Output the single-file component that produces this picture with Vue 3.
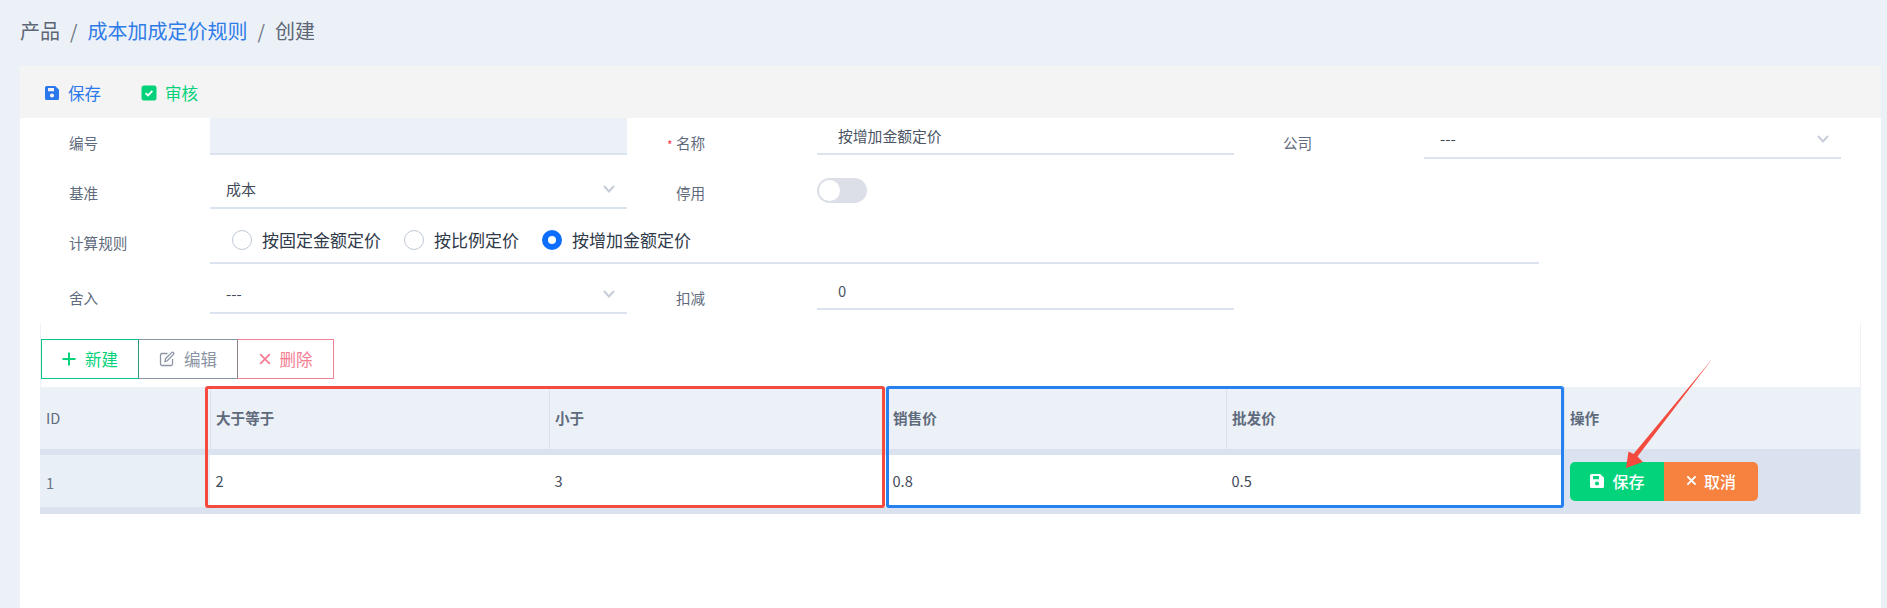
<script setup>
const radios = [
  { label: '按固定金额定价', checked: false },
  { label: '按比例定价', checked: false },
  { label: '按增加金额定价', checked: true }
]
const savePath = 'M2.5 1H11.2L15 4.8V13.5A1.5 1.5 0 0 1 13.5 15H2.5A1.5 1.5 0 0 1 1 13.5V2.5A1.5 1.5 0 0 1 2.5 1ZM4 3V6.2H10V3ZM8 8.4A2.1 2.1 0 1 0 8 12.6A2.1 2.1 0 1 0 8 8.4Z'
</script>

<template>
  <div class="page">
    <nav class="crumbs">
      <span>产品</span><i>/</i><a>成本加成定价规则</a><i>/</i><span>创建</span>
    </nav>
    <main class="panel">
      <div class="actions">
        <button class="act blue">
          <svg class="ic" viewBox="0 0 16 16"><path fill="currentColor" fill-rule="evenodd" :d="savePath" /></svg>保存
        </button>
        <button class="act green">
          <svg class="ic" viewBox="0 0 16 16"><rect x="0.5" y="0.5" width="15" height="15" rx="2.5" fill="currentColor" /><path d="M4.6 8.2 7 10.4 11.4 5.8" fill="none" stroke="#fff" stroke-width="1.8" /></svg>审核
        </button>
      </div>

      <form class="form">
        <div class="row">
          <div class="field">
            <label>编号</label>
            <div class="ctrl input readonly"></div>
          </div>
          <div class="field">
            <label><span class="req">*</span>名称</label>
            <div class="ctrl input">按增加金额定价</div>
          </div>
          <div class="field">
            <label>公司</label>
            <div class="ctrl select"><span>---</span>
              <svg class="chev" viewBox="0 0 12 8"><path d="M1 1 6 6.5 11 1" /></svg>
            </div>
          </div>
        </div>
        <div class="row">
          <div class="field">
            <label>基准</label>
            <div class="ctrl select"><span>成本</span>
              <svg class="chev" viewBox="0 0 12 8"><path d="M1 1 6 6.5 11 1" /></svg>
            </div>
          </div>
          <div class="field">
            <label>停用</label>
            <div class="switch-wrap"><span class="switch"><span class="knob"></span></span></div>
          </div>
        </div>
        <div class="row">
          <div class="field wide">
            <label>计算规则</label>
            <div class="ctrl radios">
              <span v-for="r in radios" :key="r.label" class="radio">
                <span class="dot" :class="{ on: r.checked }"></span>{{ r.label }}
              </span>
            </div>
          </div>
        </div>
        <div class="row">
          <div class="field">
            <label>舍入</label>
            <div class="ctrl select"><span>---</span>
              <svg class="chev" viewBox="0 0 12 8"><path d="M1 1 6 6.5 11 1" /></svg>
            </div>
          </div>
          <div class="field">
            <label>扣减</label>
            <div class="ctrl input">0</div>
          </div>
        </div>
      </form>

      <section class="detail">
        <div class="tools">
          <button class="tool t-new">
            <svg class="ti plus" viewBox="0 0 14 14"><path d="M7 0.5V13.5M0.5 7H13.5" fill="none" stroke="currentColor" stroke-width="2" /></svg>新建
          </button>
          <button class="tool t-edit">
            <svg class="ti" viewBox="0 0 16 16"><path d="M8.5 2.5H3A1.5 1.5 0 0 0 1.5 4V13A1.5 1.5 0 0 0 3 14.5H12A1.5 1.5 0 0 0 13.5 13V8M6 10.5 6.6 7.6 12.6 1.6A1.2 1.2 0 0 1 14.4 3.4L8.4 9.8Z" fill="none" stroke="currentColor" stroke-width="1.3" /></svg>编辑
          </button>
          <button class="tool t-del">
            <svg class="ti small" viewBox="0 0 12 12"><path d="M1.2 1.2 10.8 10.8M10.8 1.2 1.2 10.8" fill="none" stroke="currentColor" stroke-width="1.8" /></svg>删除
          </button>
        </div>

        <div class="table-wrap">
          <table>
            <colgroup>
              <col style="width:170px" /><col style="width:339px" /><col style="width:338px" />
              <col style="width:339px" /><col style="width:338px" /><col />
            </colgroup>
            <thead>
              <tr>
                <th class="id">ID</th>
                <th>大于等于</th>
                <th>小于</th>
                <th>销售价</th>
                <th>批发价</th>
                <th>操作</th>
              </tr>
            </thead>
            <tbody>
              <tr>
                <td class="id"><span>1</span></td>
                <td>2</td>
                <td>3</td>
                <td>0.8</td>
                <td>0.5</td>
                <td class="ops">
                  <div class="btns">
                    <button class="b-save">
                      <svg class="bi" viewBox="0 0 16 16"><path fill="currentColor" fill-rule="evenodd" :d="savePath" /></svg>保存
                    </button>
                    <button class="b-cancel">
                      <svg class="bi x" viewBox="0 0 12 12"><path d="M1.5 1.5 10.5 10.5M10.5 1.5 1.5 10.5" fill="none" stroke="currentColor" stroke-width="2.2" /></svg>取消
                    </button>
                  </div>
                </td>
              </tr>
            </tbody>
          </table>
          <div class="mark red"></div>
          <div class="mark bluebox"></div>
          <svg class="arrow" viewBox="0 0 100 120" width="100" height="120">
            <path d="M93 3 17.5 101.5 23 107 6 113 8.5 96.5 13.5 99Z" fill="#f44b3e" />
          </svg>
        </div>
      </section>
    </main>
  </div>
</template>

<style>
html, body { margin: 0; background: #ecf1f8; overflow: hidden; }
</style>

<style scoped>
.page {
  height: 608px;
  overflow: hidden;
  background: #ecf1f8;
  font-family: "Noto Sans CJK SC", sans-serif;
  font-size: 14.6px;
  color: #5f6b7c;
}
.crumbs {
  height: 66px;
  box-sizing: border-box;
  padding: 16px 0 0 20px;
  display: flex;
  align-items: flex-start;
  font-size: 20px;
  line-height: 30px;
  color: #5d6675;
}
.crumbs i { font-style: normal; margin: 0 10px; font-size: 19px; color: #6b7280; }
.crumbs a { color: #2f7ce8; }
.panel {
  height: 542px;
  margin: 0 6px 0 20px;
  background: #fff;
}
.actions {
  height: 52px;
  box-sizing: border-box;
  padding: 2px 0 0 24px;
  background: #f4f4f4;
  display: flex;
  align-items: center;
  gap: 40px;
}
button {
  font-family: inherit;
  border: 0;
  background: none;
  padding: 0;
  cursor: pointer;
}
.act {
  display: flex;
  align-items: center;
  gap: 8px;
  font-size: 16.5px;
  line-height: 20px;
}
.ic { width: 16px; height: 16px; }
.blue { color: #2b78ec; }
.green { color: #04d27a; }

.form {
  display: flex;
  flex-direction: column;
  gap: 9px;
  padding-left: 49px;
}
.row { display: flex; gap: 49px; }
.field { display: flex; width: 558px; }
.field.wide { width: 1470px; }
.field label {
  flex: none;
  width: 141px;
  padding-top: 15px;
  line-height: 20px;
  color: #5f6b7c;
  position: relative;
}
.req {
  position: absolute;
  left: -9px;
  top: 17px;
  color: #f0394d;
  font-size: 12px;
}
.ctrl {
  flex: 1;
  box-sizing: border-box;
  border-bottom: 2px solid #dbe3ee;
  display: flex;
  align-items: center;
  color: #4b5563;
}
.input { height: 37px; padding-left: 21px; font-size: 14.8px; }
.readonly { background: #ecf1f8; }
.select {
  height: 41px;
  padding: 2px 12px 0 16px;
  justify-content: space-between;
  font-size: 15px;
  color: #3f4a5a;
}
.chev { width: 12px; height: 8px; }
.chev path { fill: none; stroke: #c7cdd8; stroke-width: 2; }
.switch-wrap { flex: 1; height: 41px; padding-top: 3px; box-sizing: border-box; display: flex; align-items: center; }
.switch {
  width: 50px;
  height: 25px;
  border-radius: 13px;
  background: #dcdfe7;
  padding: 2px;
  box-sizing: border-box;
}
.knob {
  display: block;
  width: 21px;
  height: 21px;
  border-radius: 50%;
  background: #fff;
}
.radios {
  height: 46px;
  padding: 0 0 1px 22px;
  gap: 23px;
}
.radio {
  display: flex;
  align-items: center;
  gap: 10px;
  font-size: 17px;
  line-height: 22px;
  color: #2f3a4a;
}
.dot {
  width: 20px;
  height: 20px;
  box-sizing: border-box;
  border-radius: 50%;
  border: 1px solid #c0c8d6;
  background: #fff;
}
.dot.on { border: 6px solid #0d6efd; }

.detail {
  margin: 9px 0 0 20px;
  width: 1821px;
  box-sizing: border-box;
  border-left: 1px solid #ecf1f8;
  border-right: 1px solid #ecf1f8;
  padding-top: 16px;
}
.tools { display: flex; height: 40px; }
.tool {
  height: 40px;
  box-sizing: border-box;
  border: 1.5px solid;
  background: #fff;
  display: flex;
  align-items: center;
  justify-content: center;
  gap: 9px;
  font-size: 16.5px;
  margin-right: -1px;
}
.ti { width: 16px; height: 16px; }
.ti.plus { width: 14px; height: 14px; }
.ti.small { width: 12px; height: 12px; }
.t-new { width: 98px; color: #04d27a; border-color: #0ac583; }
.t-edit { width: 100px; color: #8a94a3; border-color: #8a94a3; border-left-color: #2c9a7d; }
.t-del { width: 97px; color: #f47d92; border-color: #ef8295; border-left-color: #8e7f8d; }

.table-wrap { position: relative; margin: 8px 0 0 -1px; }
table {
  width: 1820px;
  table-layout: fixed;
  border-collapse: separate;
  border-spacing: 0;
  font-size: 14.6px;
}
th {
  height: 60px;
  padding: 0 6px 2px 5px;
  text-align: left;
  font-weight: 700;
  background: #ecf1f8;
  border-left: 1px solid #dbe2ec;
  border-bottom: 6px solid #d9e2ee;
  color: #5f6b7c;
}
th.id { font-weight: 400; border-left: 0; padding-left: 6px; }
td {
  height: 50px;
  padding: 0 6px 2px 5.5px;
  background: #fff;
  border-bottom: 7px solid #d9e2ee;
  color: #3f4a5a;
}
td.id { background: #e9eff7; color: #6b7686; padding-left: 6px; }
td.id span { position: relative; top: 2px; }
td.ops { background: #d9e2ee; padding: 0 6px 0; }
.btns { display: flex; }
.btns button {
  height: 39px;
  padding-bottom: 1px;
  display: flex;
  align-items: center;
  justify-content: center;
  gap: 7px;
  color: #fff;
  font-size: 16px;
  font-weight: 500;
}
.b-save { width: 94px; background: #03d47c; border-radius: 5px 0 0 5px; }
.b-cancel { width: 94px; background: #f7813f; border-radius: 0 5px 5px 0; }
.bi { width: 16px; height: 16px; }
.bi.x { width: 11px; height: 11px; }

.mark {
  position: absolute;
  top: -1px;
  height: 122px;
  box-sizing: border-box;
  border: 3px solid;
  border-radius: 3px;
  pointer-events: none;
}
.mark.red { left: 165px; width: 680px; border-color: #f44b3e; }
.mark.bluebox { left: 846px; width: 678px; border-color: #2580f0; }
.arrow { position: absolute; left: 1580px; top: -32px; pointer-events: none; }
</style>
